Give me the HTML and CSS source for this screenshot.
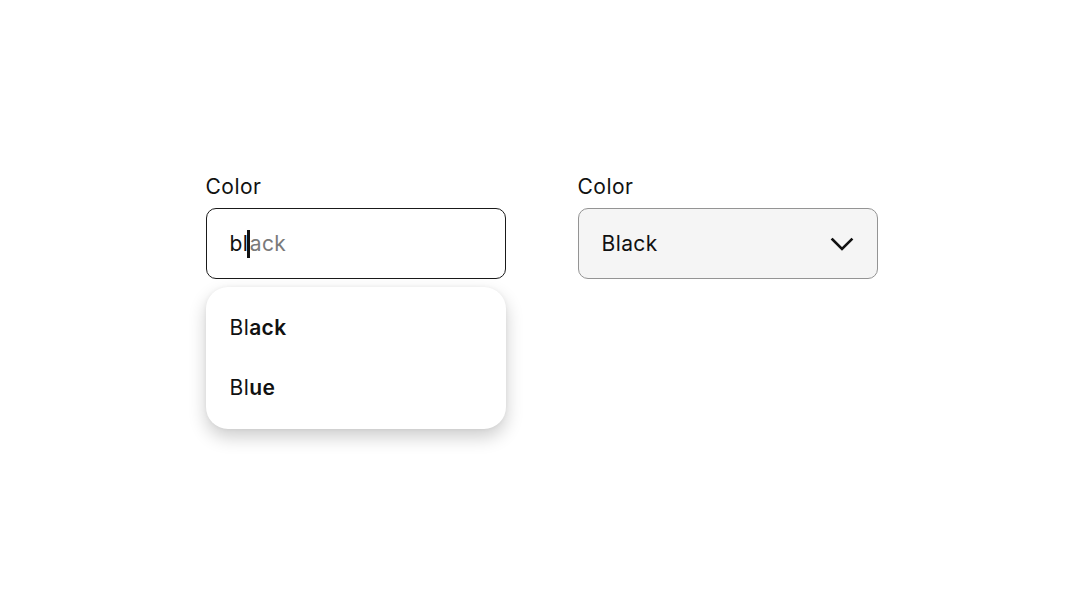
FILE: index.html
```html
<!DOCTYPE html>
<html lang="en">
<head>
    <meta charset="UTF-8">
    <meta name="viewport" content="width=device-width, initial-scale=1.0">
    <title>Color fields</title>
    <link rel="stylesheet" href="styles.css">
</head>
<body>
    <div class="fields">
        <div class="field">
            <label class="label" for="color-search">Color</label>
            <div class="input focused">
                <span class="typed">bl</span><span class="caret"></span><span class="hint">ack</span>
            </div>
            <ul class="menu">
                <li>Bl<b>ack</b></li>
                <li>Bl<b>ue</b></li>
            </ul>
        </div>

        <div class="field">
            <label class="label" for="color-select">Color</label>
            <div class="input select" id="color-select">
                <span>Black</span>
                <svg class="chevron" width="24" height="16" viewBox="0 0 24 16">
                    <path d="M2.5 2.5 L12 12 L21.5 2.5" fill="none" stroke="#111" stroke-width="2.6" stroke-linecap="square" stroke-linejoin="miter"/>
                </svg>
            </div>
        </div>
    </div>
</body>
</html>
```

FILE: styles.css
```css
body {
    margin: 0;
    min-height: 600px;
    font-family: Inter, "Noto Sans", Arial, sans-serif;
    color: #111;
    background-color: #fff;
}
.fields {
    display: flex;
    justify-content: center;
    gap: 72px;
    padding-top: 174px;
}
.field {
    width: 300px;
    display: flex;
    flex-direction: column;
}
.label {
    font-size: 21px;
    line-height: 26px;
    letter-spacing: 0.5px;
    margin-bottom: 8px;
}
.input {
    box-sizing: border-box;
    height: 71px;
    border-radius: 10px;
    padding: 0 22px 0 23px;
    display: flex;
    align-items: center;
    font-size: 21px;
    letter-spacing: 0.4px;
}
.input.focused {
    border: 1.5px solid #1a1a1a;
}
.caret {
    display: inline-block;
    width: 2.5px;
    height: 28px;
    background-color: #111;
    margin: 0 0 0 -1px;
}
.hint {
    color: #7a7a7a;
}
.select {
    background-color: #f5f5f5;
    border: 1.5px solid #949494;
    justify-content: space-between;
}
.chevron {
    margin-right: 1px;
    margin-top: 2px;
}
.menu {
    list-style: none;
    margin: 8px 0 0;
    padding: 11px 0;
    background-color: #fff;
    border-radius: 22px;
    box-shadow: 0 8px 18px rgba(0, 0, 0, 0.2), 0 0 4px rgba(0, 0, 0, 0.05);
}
.menu li {
    height: 60px;
    line-height: 60px;
    padding: 0 24px;
    font-size: 21px;
    letter-spacing: 0.4px;
}
.menu b {
    font-weight: 600;
}
```
